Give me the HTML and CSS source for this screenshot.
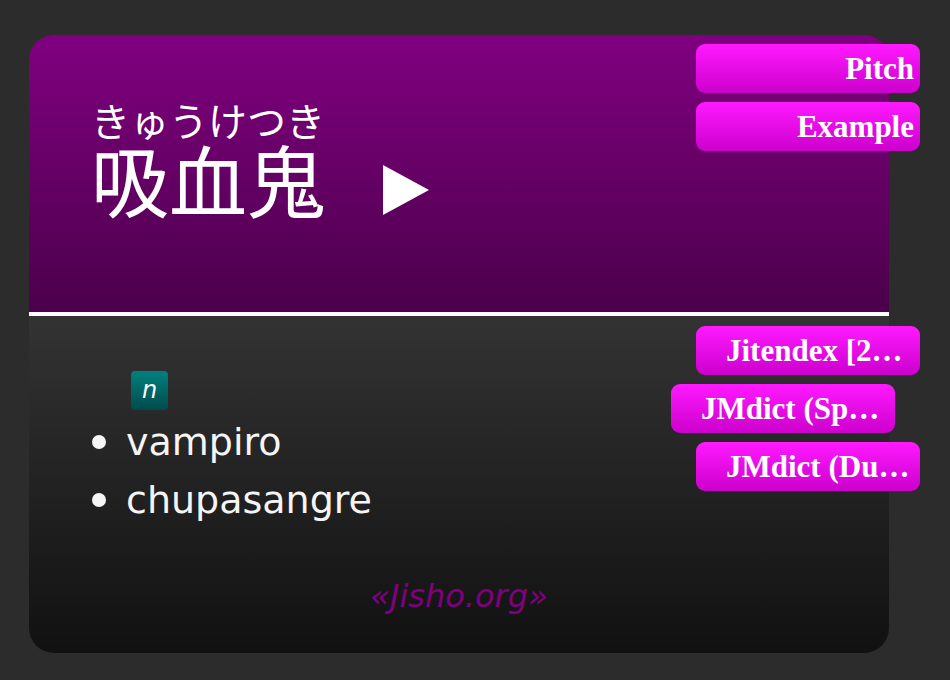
FILE: index.html
```html
<!DOCTYPE html>
<html lang="ja">
<head>
<meta charset="utf-8">
<title>吸血鬼</title>
<link rel="stylesheet" href="styles.css">
</head>
<body>
<main class="card">
  <header class="front">
    <h1 class="word"><ruby class="reading"><span class="kanji">吸血鬼</span><rt class="kana">きゅうけつき</rt></ruby></h1>
    <button class="play" type="button" aria-label="再生"><svg class="play-icon" viewBox="0 0 46 50"><path d="M0 0 46 25 0 50Z"/></svg></button>
    <nav class="tabs tabs-front">
      <button class="tab" type="button">Pitch</button>
      <button class="tab" type="button">Example</button>
    </nav>
  </header>
  <section class="back" lang="es">
    <span class="tag">n</span>
    <ul class="meanings">
      <li>vampiro</li>
      <li>chupasangre</li>
    </ul>
    <a class="source" href="#">«Jisho.org»</a>
    <nav class="tabs tabs-back">
      <button class="tab tab-dictionary" type="button">Jitendex [2…</button>
      <button class="tab tab-dictionary tab-active" type="button">JMdict (Sp…</button>
      <button class="tab tab-dictionary" type="button">JMdict (Du…</button>
    </nav>
  </section>
</main>
</body>
</html>
```
FILE: styles.css
```css
* { box-sizing: border-box; }

body {
  margin: 0;
  padding: 35px 61px 27px 29px;
  min-height: 100vh;
  display: flex;
  background: #2c2c2c;
  color: #fff;
  font-family: "DejaVu Sans", "Noto Sans CJK JP", sans-serif;
}

.card {
  flex: 1;
  display: flex;
  flex-direction: column;
}

.front {
  position: relative;
  display: flex;
  align-items: flex-start;
  gap: 58px;
  height: 281px;
  padding: 62px 62px 0;
  border-bottom: 4px solid #fff;
  border-radius: 25px 25px 0 0;
  background: linear-gradient(#800080, #4b004b);
}

.word {
  margin: 0;
  font-family: "Noto Sans CJK JP", sans-serif;
  font-weight: 400;
}

.reading {
  display: flex;
  flex-direction: column-reverse;
}

.kanji {
  font-size: 78px;
  line-height: 74px;
}

.kana {
  display: block;
  font-size: 39px;
  line-height: 44px;
}

.play {
  margin: 68px 0 0;
  padding: 0;
  border: 0;
  background: none;
}

.play-icon {
  display: block;
  width: 46px;
  height: 50px;
  fill: #fff;
}

.back {
  position: relative;
  flex: 1;
  display: flex;
  flex-direction: column;
  align-items: flex-start;
  padding: 55px 63px 37px;
  border-radius: 0 0 25px 25px;
  background: linear-gradient(#333, #111);
  color: #f5f5f5;
}

.tag {
  margin-left: 39px;
  padding: 0 11px;
  border-radius: 4px;
  background: linear-gradient(#008080, #004b4b);
  color: #fff;
  font-size: 24px;
  font-style: italic;
  line-height: 39px;
}

.meanings {
  margin: 3px 0 0;
  padding: 0;
  list-style: none;
  font-size: 38px;
  line-height: 58px;
}

.meanings li {
  display: flex;
  align-items: center;
  gap: 20px;
}

.meanings li::before {
  content: "";
  width: 14px;
  height: 14px;
  border-radius: 50%;
  background: #f5f5f5;
}

.source {
  align-self: center;
  margin-top: auto;
  color: #800080;
  font-size: 32px;
  font-style: italic;
  line-height: 40px;
  text-decoration: none;
}

.tabs {
  position: absolute;
  right: -31px;
  display: flex;
  flex-direction: column;
  gap: 9px;
  width: 224px;
}

.tabs-front { top: 9px; }
.tabs-back { top: 10px; }

.tab {
  width: 100%;
  height: 49px;
  padding: 0 6px;
  border: 0;
  border-radius: 9px;
  background: linear-gradient(#ff1aff, #cc00cc);
  color: #fff;
  font: bold 31px "Liberation Serif", serif;
  text-align: right;
  white-space: nowrap;
}

.tab-dictionary {
  padding-left: 30px;
  text-align: left;
}

.tab-active { transform: translateX(-25px); }
```
